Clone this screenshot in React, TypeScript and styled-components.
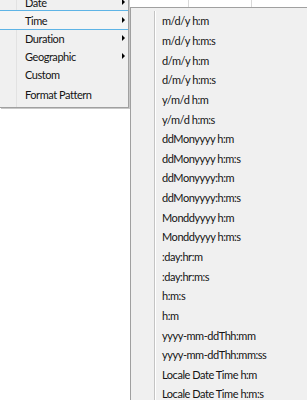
import React from 'react';
import styled, { createGlobalStyle } from 'styled-components';

const GlobalStyle = createGlobalStyle`
  html, body {
    margin: 0;
    padding: 0;
    background: #ffffff;
    overflow: hidden;
  }
  body {
    font-family: Lato, 'Liberation Sans', sans-serif;
  }
`;

const Sheet = styled.div`
  position: relative;
  width: 307px;
  height: 400px;
  background: #ffffff;
  overflow: hidden;
`;

const GridStrip = styled.div`
  display: grid;
  grid-template-columns: 188px 63px 56px;
  height: 8px;
  div + div {
    border-left: 1px solid #d9d9d9;
  }
`;

// popup menus float over the sheet
const MainMenu = styled.div`
  position: absolute;
  left: 0;
  top: -7px;
  width: 128px;
  background: #f0f0f0;
  border-right: 1px solid #a0a0a0;
  border-bottom: 1px solid #a0a0a0;
  box-shadow: 1px 1px 0 #c8c8c8;
  padding-bottom: 2px;
  &::before {
    content: '';
    position: absolute;
    left: 16px;
    top: 0;
    bottom: 0;
    width: 1px;
    background: #e2e2e2;
  }
`;

const SubMenu = styled.div`
  position: absolute;
  left: 130px;
  top: 7px;
  width: 176px;
  height: 400px;
  background: #f0f0f0;
  border: 1px solid #a0a0a0;
  border-bottom: none;
  padding-top: 3px;
  &::before {
    content: '';
    position: absolute;
    left: 23px;
    top: 3px;
    bottom: 0;
    width: 1px;
    background: #c4c4c4;
    box-shadow: 1px 0 0 #ffffff;
  }
`;

const Item = styled.div<{ $active?: boolean; $tall?: boolean }>`
  position: relative;
  display: flex;
  align-items: center;
  padding-left: 25px;
  box-sizing: border-box;
  font-size: 11px;
  letter-spacing: -0.45px;
  color: #141414;
  white-space: nowrap;
  background: ${(p) => (p.$active ? '#f5f5f5' : 'transparent')};
  border-top: 1px solid ${(p) => (p.$active ? '#5eb4e6' : 'transparent')};
  border-bottom: 1px solid ${(p) => (p.$active ? '#5eb4e6' : 'transparent')};
  margin: ${(p) => (p.$active ? '-1px 0' : '0')};
  height: ${(p) => (p.$active ? '20px' : p.$tall ? '22px' : '18px')};
`;

const Arrow = styled.span`
  position: absolute;
  right: 3px;
  top: 50%;
  margin-top: -3px;
  width: 0;
  height: 0;
  border-top: 3px solid transparent;
  border-bottom: 3px solid transparent;
  border-left: 3px solid #000000;
`;

const SubItem = styled.div`
  display: flex;
  align-items: center;
  height: 19.65px;
  padding-left: 31px;
  font-size: 11px;
  letter-spacing: -0.45px;
  color: #141414;
  white-space: nowrap;
`;

const mainItems = [
  { label: 'Date', sub: true },
  { label: 'Time', sub: true, active: true },
  { label: 'Duration', sub: true },
  { label: 'Geographic', sub: true },
  { label: 'Custom' },
  { label: 'Format Pattern', tall: true },
];

const timeFormats = [
  'm/d/y h:m',
  'm/d/y h:m:s',
  'd/m/y h:m',
  'd/m/y h:m:s',
  'y/m/d h:m',
  'y/m/d h:m:s',
  'ddMonyyyy h:m',
  'ddMonyyyy h:m:s',
  'ddMonyyyy:h:m',
  'ddMonyyyy:h:m:s',
  'Monddyyyy h:m',
  'Monddyyyy h:m:s',
  ':day:hr:m',
  ':day:hr:m:s',
  'h:m:s',
  'h:m',
  'yyyy-mm-ddThh:mm',
  'yyyy-mm-ddThh:mm:ss',
  'Locale Date Time h:m',
  'Locale Date Time h:m:s',
];

export default function App() {
  return (
    <>
      <GlobalStyle />
      <Sheet>
        <GridStrip>
          <div />
          <div />
          <div />
        </GridStrip>
        <MainMenu>
          {mainItems.map((it) => (
            <Item key={it.label} $active={it.active} $tall={it.tall}>
              {it.label}
              {it.sub && <Arrow />}
            </Item>
          ))}
        </MainMenu>
        <SubMenu>
          {timeFormats.map((f) => (
            <SubItem key={f}>{f}</SubItem>
          ))}
        </SubMenu>
      </Sheet>
    </>
  );
}
